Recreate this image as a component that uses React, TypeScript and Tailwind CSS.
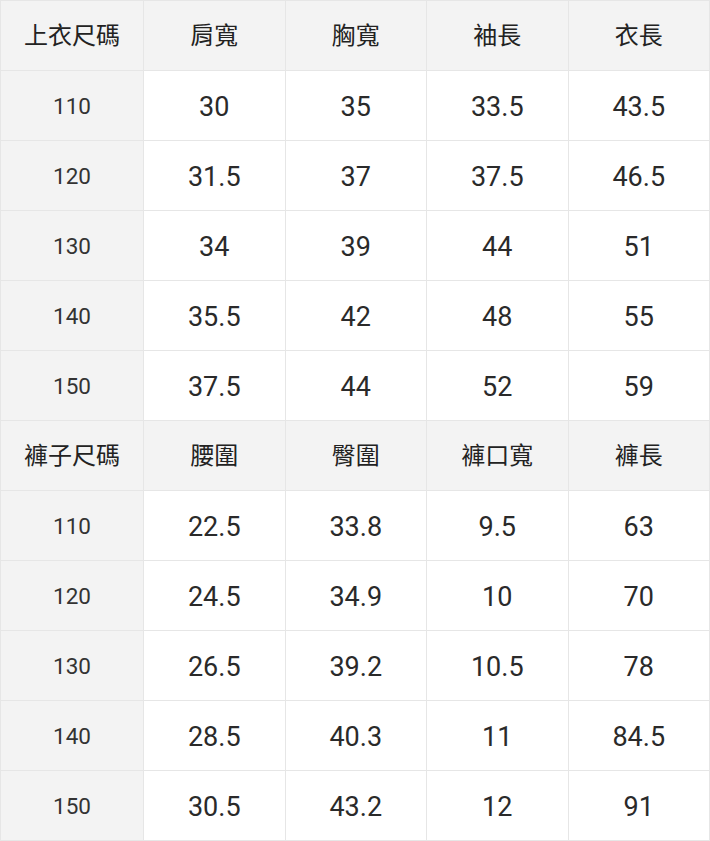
const tops = [
  ["110", "30", "35", "33.5", "43.5"],
  ["120", "31.5", "37", "37.5", "46.5"],
  ["130", "34", "39", "44", "51"],
  ["140", "35.5", "42", "48", "55"],
  ["150", "37.5", "44", "52", "59"],
];

const pants = [
  ["110", "22.5", "33.8", "9.5", "63"],
  ["120", "24.5", "34.9", "10", "70"],
  ["130", "26.5", "39.2", "10.5", "78"],
  ["140", "28.5", "40.3", "11", "84.5"],
  ["150", "30.5", "43.2", "12", "91"],
];

const HeadRow = ({ cells }: { cells: string[] }) => (
  <tr className="h-[70px] bg-[#f3f3f3]">
    {cells.map((c, i) => (
      <td
        key={i}
        className="border border-[#e6e6e6] pt-[1px] text-center text-[24px] text-[#222]"
      >
        {c}
      </td>
    ))}
  </tr>
);

const DataRow = ({ cells }: { cells: string[] }) => (
  <tr className="h-[70px]">
    {cells.map((c, i) => (
      <td
        key={i}
        className={
          i === 0
            ? "border border-[#e6e6e6] bg-[#f3f3f3] pt-[2px] text-center text-[22.5px] text-[#333]"
            : "border border-[#e6e6e6] bg-white pt-[3px] text-center text-[27px] text-[#2a2a2a]"
        }
      >
        {c}
      </td>
    ))}
  </tr>
);

export default function App() {
  return (
    <div
      className="w-[710px] bg-white"
      style={{ fontFamily: 'Roboto, "Noto Sans CJK TC", sans-serif' }}
    >
      <table className="w-full table-fixed border-collapse">
        <colgroup>
          <col className="w-[143px]" />
          <col />
          <col />
          <col />
          <col />
        </colgroup>
        <tbody>
          <HeadRow cells={["上衣尺碼", "肩寬", "胸寬", "袖長", "衣長"]} />
          {tops.map((r, i) => (
            <DataRow key={"t" + i} cells={r} />
          ))}
          <HeadRow cells={["褲子尺碼", "腰圍", "臀圍", "褲口寬", "褲長"]} />
          {pants.map((r, i) => (
            <DataRow key={"p" + i} cells={r} />
          ))}
        </tbody>
      </table>
    </div>
  );
}
